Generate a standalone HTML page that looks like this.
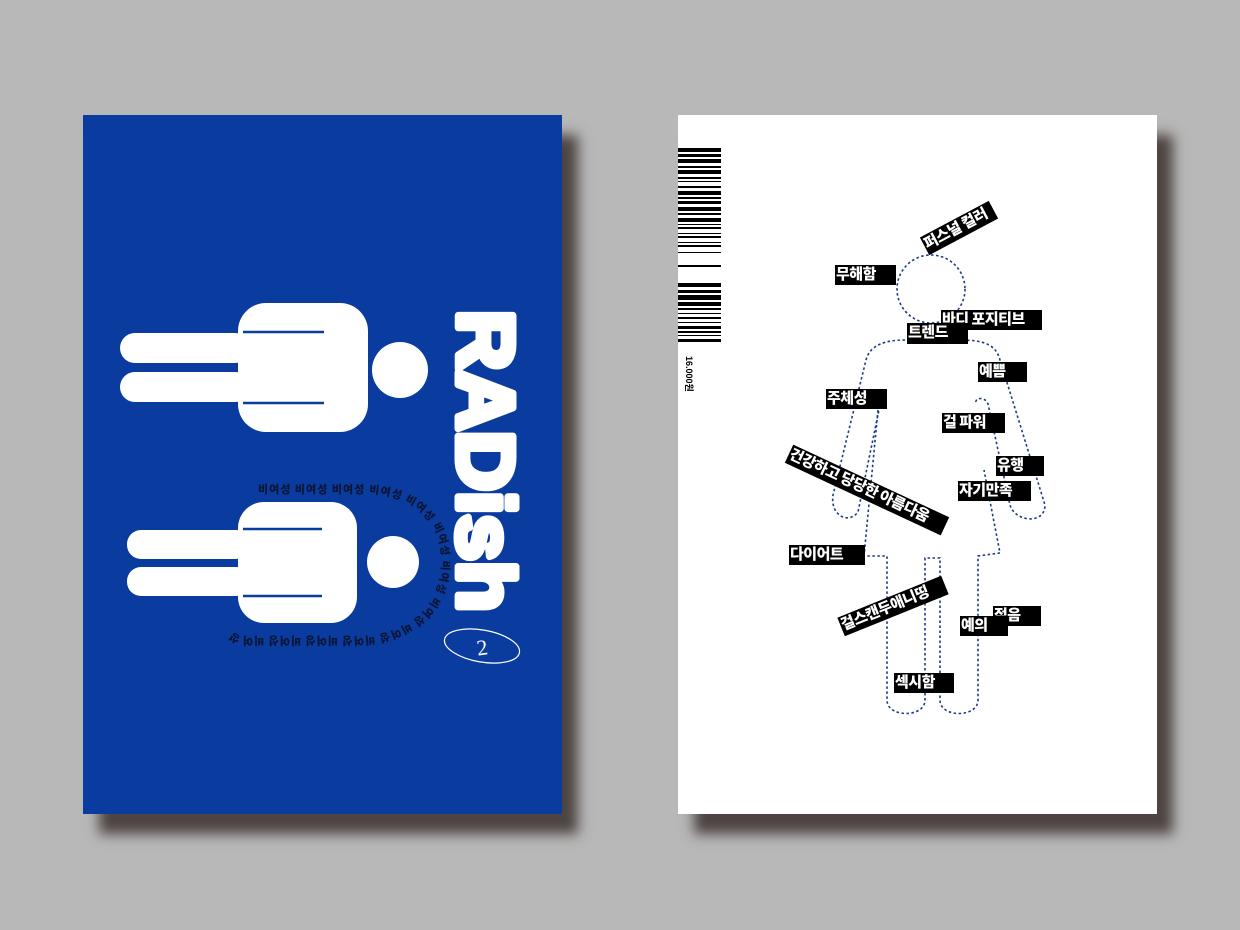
<!DOCTYPE html>
<html><head><meta charset="utf-8"><style>
body{margin:0;width:1240px;height:930px;background:#b8b8b8;position:relative;overflow:hidden;font-family:"Liberation Sans","Noto Sans CJK KR",sans-serif}
.card{position:absolute;top:115px;width:479px;height:699px;box-shadow:16px 20px 12px #4e4542}
#l{left:83px;background:#0a3c9f}
#r{left:678px;background:#fff}
.lb{position:absolute;background:#000;color:#fff;font:900 15px/18px "Noto Sans CJK KR",sans-serif;height:20px;padding-left:1px;box-sizing:border-box;white-space:nowrap;letter-spacing:-0.5px;overflow:hidden}
svg{position:absolute;left:0;top:0}
</style></head><body>
<div class="card" id="l"></div>
<div class="card" id="r"></div>
<svg width="1240" height="930">
<g fill="#fff">
<rect x="238" y="303" width="130" height="129" rx="28"/>
<rect x="120" y="333" width="130" height="30" rx="15"/>
<rect x="120" y="372" width="130" height="30" rx="15"/>
<circle cx="400" cy="370" r="28"/>
<rect x="238" y="502" width="119" height="121" rx="26"/>
<rect x="127" y="530" width="123" height="29" rx="14"/>
<rect x="127" y="567" width="123" height="29" rx="14"/>
<circle cx="393" cy="562" r="26"/>
</g>
<g stroke="#0a3c9f" stroke-width="2.5">
<line x1="243" y1="332" x2="324" y2="332"/><line x1="243" y1="403" x2="324" y2="403"/>
<line x1="243" y1="529" x2="322" y2="529"/><line x1="243" y1="596" x2="322" y2="596"/>
</g>
<path id="cp" d="M258,493 L365,493 C400,495 420,505 435,530 C450,560 440,610 405,625 C385,636 370,637 350,637 L240,637 C226,630 228,608 210,607 L110,607" fill="none"/>
<text font-family="Noto Sans CJK KR,sans-serif" font-size="11" font-weight="900" fill="#0c1436" letter-spacing="1"><textPath href="#cp">비여성 비여성 비여성 비여성 비여성 비여성 비여성 비여성 비여성 비여성 비여성 비여성 비여성</textPath></text>
<text x="0" y="0" transform="translate(458,310) rotate(90)" font-family="Liberation Sans,sans-serif" font-weight="bold" font-size="80" fill="#fff" stroke="#fff" stroke-width="7" stroke-linejoin="round" textLength="302" lengthAdjust="spacingAndGlyphs">RADish</text>
<ellipse cx="482" cy="646" rx="38" ry="16" transform="rotate(10 482 646)" fill="none" stroke="#fff" stroke-width="1.2"/>
<text x="482" y="655" font-family="Liberation Serif,serif" font-size="22" fill="#fff" text-anchor="middle" transform="rotate(-8 482 646)">2</text>
<g fill="#000">
<rect x="678" y="148" width="43" height="4"/><rect x="678" y="154" width="43" height="3"/><rect x="678" y="159" width="43" height="4"/><rect x="678" y="166" width="43" height="2"/><rect x="678" y="170" width="43" height="4"/><rect x="678" y="177" width="43" height="2"/><rect x="678" y="181" width="43" height="1"/><rect x="678" y="186" width="43" height="2"/><rect x="678" y="191" width="43" height="4"/><rect x="678" y="197" width="43" height="2"/><rect x="678" y="201" width="43" height="3"/><rect x="678" y="207" width="43" height="4"/><rect x="678" y="213" width="43" height="2"/><rect x="678" y="218" width="43" height="4"/><rect x="678" y="224" width="43" height="1"/><rect x="678" y="227" width="43" height="2"/><rect x="678" y="233" width="43" height="1"/><rect x="678" y="236" width="43" height="2"/><rect x="678" y="242" width="43" height="1"/><rect x="678" y="245" width="43" height="2"/><rect x="678" y="252" width="43" height="1"/><rect x="678" y="265" width="43" height="2"/>
<rect x="678" y="283" width="43" height="4"/><rect x="678" y="290" width="43" height="3"/><rect x="678" y="295" width="43" height="5"/><rect x="678" y="302" width="43" height="4"/><rect x="678" y="308" width="43" height="2"/><rect x="678" y="313" width="43" height="1"/><rect x="678" y="317" width="43" height="2"/><rect x="678" y="322" width="43" height="1"/><rect x="678" y="326" width="43" height="3"/><rect x="678" y="331" width="43" height="2"/><rect x="678" y="335" width="43" height="1"/><rect x="678" y="339" width="43" height="3"/>
</g>
<text transform="translate(686,356) rotate(90)" font-family="Liberation Sans,Noto Sans CJK KR,sans-serif" font-weight="700" font-size="9" fill="#000">16.000원</text>
<g fill="none" stroke="#1a3a8c" stroke-width="1.6" stroke-dasharray="2.5 2.5">
<circle cx="931" cy="289" r="34"/>
<path d="M905,340 C885,340 870,345 866,360 L833,495 C830,515 848,525 858,512 L880,405"/>
<path d="M878,410 L864,556 L887,556 L887,700 C887,718 925,718 925,700 L925,558 L940,558 L940,700 C940,718 978,718 978,700 L978,556 L1000,553 L984,470"/>
<path d="M976,402 C975,398 985,396 988,404 L1010,505 C1015,522 1045,525 1045,505 L1000,360 C996,345 985,340 960,340"/>
</g>
</svg>
<div class="lb" style="left:835px;top:265px;width:61px">무해함</div>
<div class="lb" style="left:920px;top:218px;width:78px;transform:rotate(-28deg)">퍼스널 컬러</div>
<div class="lb" style="left:941px;top:310px;width:101px">바디 포지티브</div>
<div class="lb" style="left:907px;top:323px;width:61px;height:21px">트렌드</div>
<div class="lb" style="left:978px;top:362px;width:49px">예쁨</div>
<div class="lb" style="left:826px;top:389px;width:61px">주체성</div>
<div class="lb" style="left:942px;top:413px;width:63px">걸 파워</div>
<div class="lb" style="left:781px;top:480px;width:172px;transform:rotate(25deg)">건강하고 당당한 아름다움</div>
<div class="lb" style="left:996px;top:456px;width:48px">유행</div>
<div class="lb" style="left:958px;top:481px;width:73px">자기만족</div>
<div class="lb" style="left:789px;top:545px;width:76px">다이어트</div>
<div class="lb" style="left:837px;top:596px;width:112px;transform:rotate(-22deg)">걸스캔두애니띵</div>
<div class="lb" style="left:993px;top:606px;width:48px">젊음</div>
<div class="lb" style="left:960px;top:616px;width:48px">예의</div>
<div class="lb" style="left:894px;top:673px;width:60px">섹시함</div>
</body></html>
